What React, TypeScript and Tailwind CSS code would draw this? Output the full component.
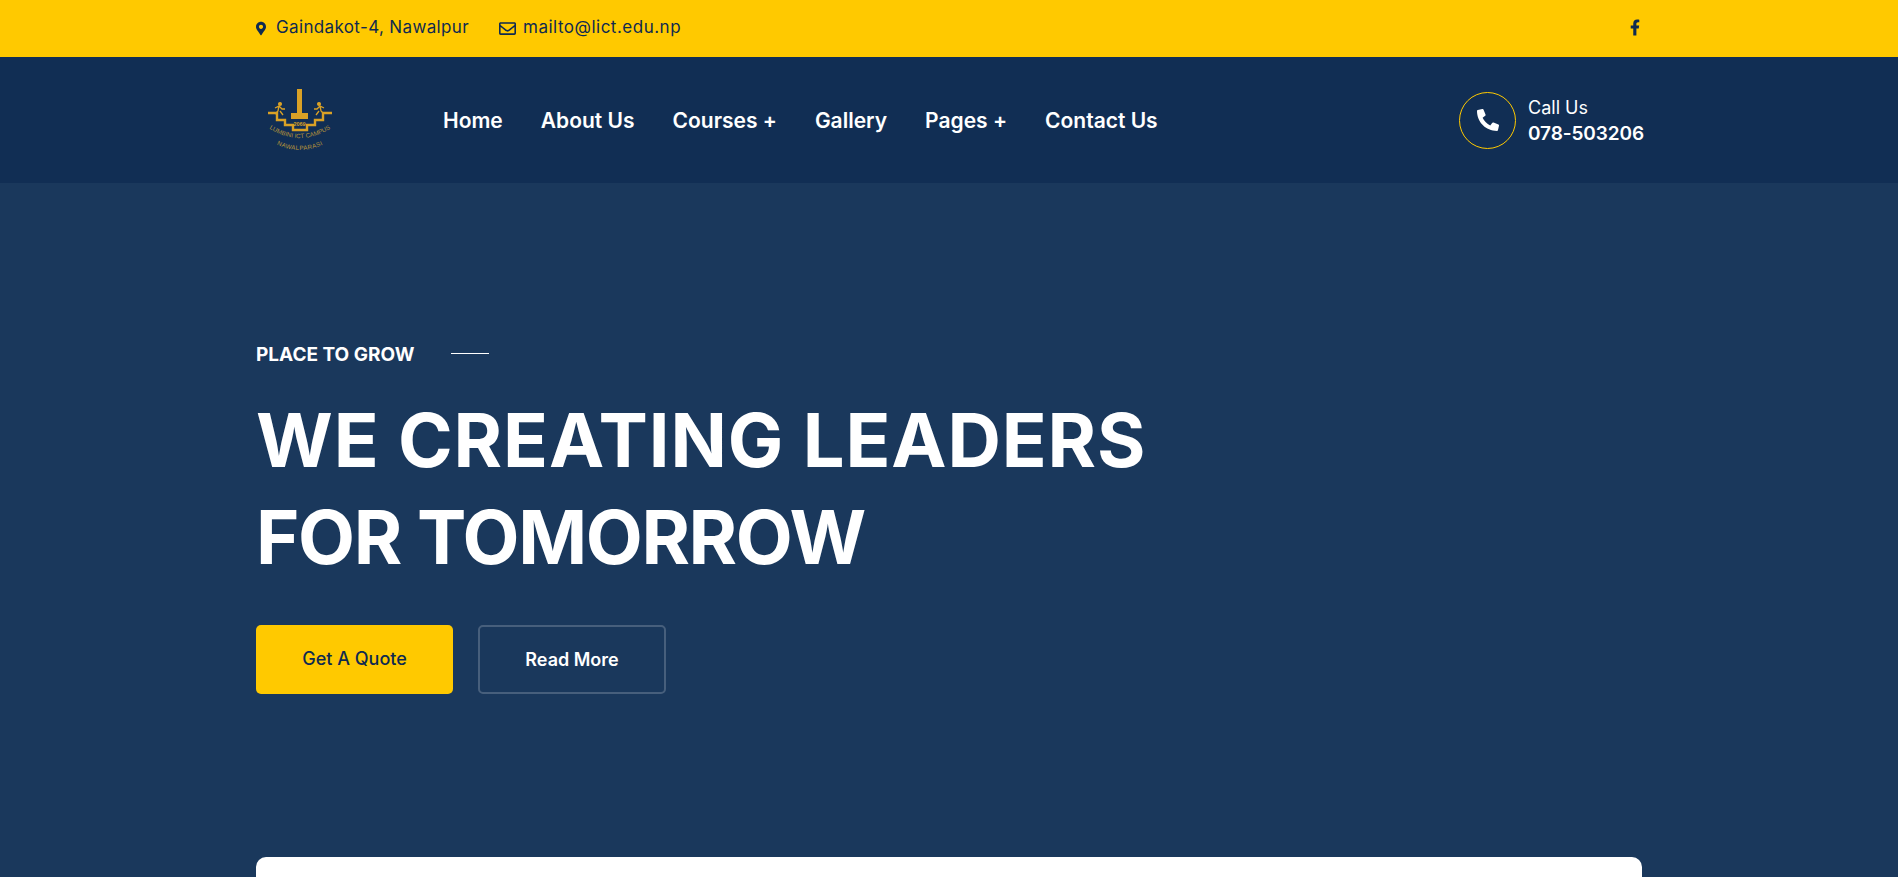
import { FaFacebookF, FaMapMarkerAlt, FaPhoneAlt, FaRegEnvelope } from "react-icons/fa"

const navItems = ["Home", "About Us", "Courses +", "Gallery", "Pages +", "Contact Us"]

function Logo() {
  return (
    <svg viewBox="0 0 100 90" className="-ml-[6px] h-[90px] w-[100px]" fill="none">
      <path d="M18 38h9v7h8v5h8v5h14v-5h8v-5h8v-7h9" stroke="#d9a126" strokeWidth="2.4" />
      <rect x="47" y="14" width="5" height="24" fill="#d9a126" />
      <rect x="41" y="38" width="17" height="6" fill="#d9a126" />
      <g stroke="#d9a126" strokeWidth="1.3">
        <circle cx="30" cy="29" r="1.4" fill="#d9a126" />
        <path d="M25 33l4-2 3 3 3 0M29 31l-1 5-3 3M30 36l3 4" />
        <circle cx="69" cy="29" r="1.4" fill="#d9a126" />
        <path d="M74 33l-4-2-3 3-3 0M70 31l1 5 3 3M69 36l-3 4" />
      </g>
      <text x="49.5" y="51" textAnchor="middle" fontSize="5.5" fontWeight="700" fill="#d9a126" fontFamily="'Liberation Sans', sans-serif">2069</text>
      <path id="logoArcTop" d="M14 50Q50 76 86 50" />
      <path id="logoArcBottom" d="M20 66Q50 84 80 66" />
      <text fontSize="6.2" fill="#b8953a" fontFamily="'Liberation Sans', sans-serif">
        <textPath href="#logoArcTop" startOffset="50%" textAnchor="middle">LUMBINI ICT CAMPUS</textPath>
      </text>
      <text fontSize="6.2" letterSpacing="0.4" fill="#b8953a" fontFamily="'Liberation Sans', sans-serif">
        <textPath href="#logoArcBottom" startOffset="50%" textAnchor="middle">NAWALPARASI</textPath>
      </text>
    </svg>
  )
}

export default function App() {
  return (
    <div className="h-[877px] overflow-hidden bg-[#1a385c] font-['Inter',sans-serif]">
      <div className="h-[57px] bg-[#ffc900] px-[256px]">
        <div className="flex h-full items-center justify-between text-[#0f2a50]">
          <div className="flex items-center pb-[1px] text-[17px] tracking-[0.36px]">
            <FaMapMarkerAlt className="mr-[10px] h-[15px] w-[10px]" />
            <span>Gaindakot-4, Nawalpur</span>
            <FaRegEnvelope className="ml-[30px] mr-[7px] h-[17px] w-[17px]" />
            <span className="tracking-[0.5px]">mailto@lict.edu.np</span>
          </div>
          <FaFacebookF className="mb-[3px] mr-[2px] h-[17px] w-[10px]" />
        </div>
      </div>

      <header className="flex h-[126px] items-center bg-[#112e54] px-[256px]">
        <div className="w-[187px]">
          <Logo />
        </div>
        <nav className="flex gap-[38px] pt-[1px] text-[21px] font-semibold text-white">
          {navItems.map((item) => (
            <a key={item} href="#">{item}</a>
          ))}
        </nav>
        <div className="-mr-[2px] ml-auto flex items-center gap-[12px] text-white">
          <div className="flex h-[57px] w-[57px] items-center justify-center rounded-full border border-[#ffc900]">
            <FaPhoneAlt className="h-[22px] w-[22px]" />
          </div>
          <div className="pt-[1px]">
            <div className="text-[18px] leading-[26px]">Call Us</div>
            <div className="text-[19px] font-semibold leading-[26px] tracking-[-0.1px]">078-503206</div>
          </div>
        </div>
      </header>

      <main className="px-[256px] pt-[158px]">
        <div className="flex h-[26px] items-center text-[19px] font-bold text-white">
          <span className="pt-[2px] leading-[24px]">PLACE TO GROW</span>
          <span className="mb-[2px] ml-[37px] h-px w-[38px] bg-white" />
        </div>
        <h1 className="mt-[25px] text-[74px] font-bold leading-[97px] text-white">
          <span className="tracking-[0.9px]">WE CREATING LEADERS</span>
          <br />
          <span className="tracking-[-1.4px]">FOR TOMORROW</span>
        </h1>
        <div className="mt-[39px] flex gap-[25px]">
          <a href="#" className="flex h-[69px] w-[197px] items-center justify-center rounded-[5px] bg-[#ffc900] pb-[2px] text-[18px] font-medium text-[#0f2a50]">
            Get A Quote
          </a>
          <a href="#" className="flex h-[69px] w-[188px] items-center justify-center rounded-[5px] border-2 border-white/20 text-[18px] font-semibold text-white">
            Read More
          </a>
        </div>
        <div className="mt-[163px] h-[40px] rounded-t-[10px] bg-white" />
      </main>
    </div>
  )
}
